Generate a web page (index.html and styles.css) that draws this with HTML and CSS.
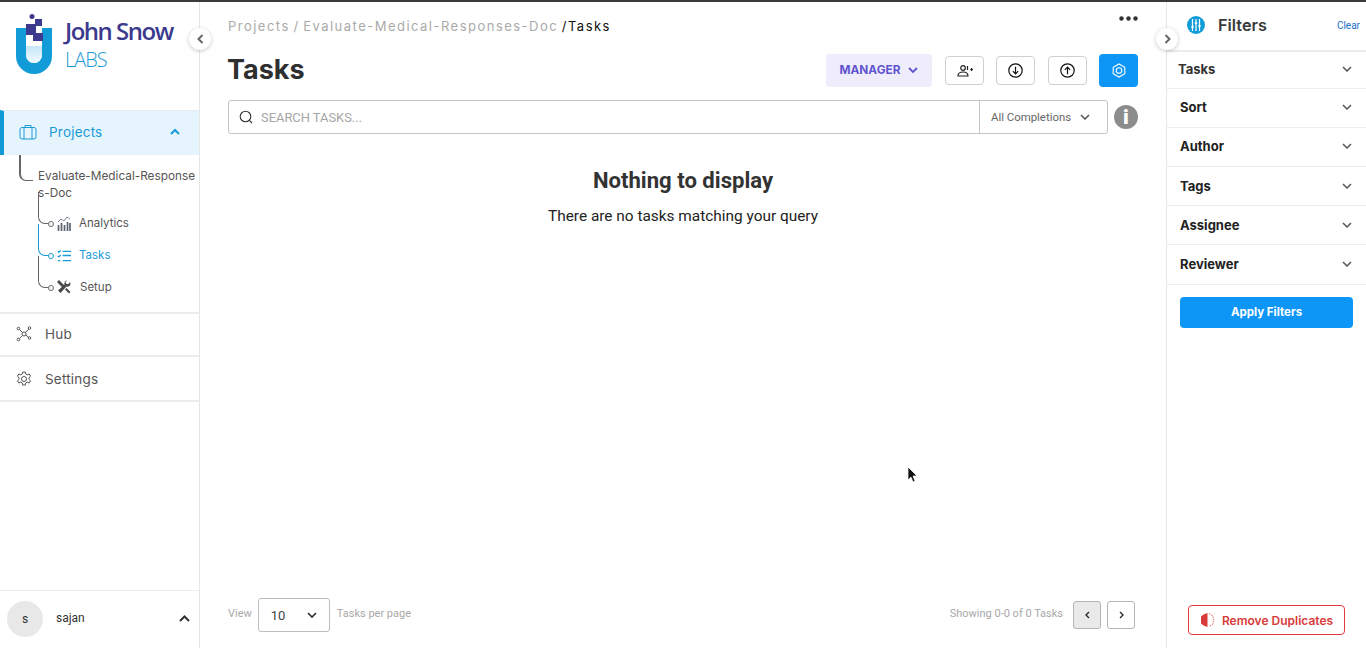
FILE: index.html
```html
<!DOCTYPE html>
<html lang="en">
<head>
<meta charset="utf-8">
<title>Tasks</title>
<link rel="stylesheet" href="styles.css">
</head>
<body>
<div class="app">
  <aside class="sidebar">
    <div class="logo">
      <svg class="logo-mark" width="36" height="60" viewBox="0 0 36 60">
        <defs><linearGradient id="flask" x1="0" y1="0" x2="0" y2="1"><stop offset="0" stop-color="#c4e6f8"/><stop offset="1" stop-color="#f2fafe"/></linearGradient></defs>
        <path d="M0 14h10v27a8 8 0 0 0 16 0V14h10v28a18 18 0 0 1-36 0z" fill="#119cd8"/>
        <path d="M10 32h16v9a8 8 0 0 1-16 0z" fill="url(#flask)"/>
        <rect x="19" y="5" width="7" height="7" fill="#3c3a8e"/>
        <rect x="10" y="10" width="10" height="11" fill="#3c3a8e"/>
        <rect x="17" y="19" width="10" height="8" fill="#3c3a8e"/>
        <circle cx="16" cy="2.500" r="2.500" fill="#3c3a8e"/>
      </svg>
      <div class="logo-text">
        <div class="logo-john">John Snow</div>
        <div class="logo-labs">LABS</div>
      </div>
    </div>
    <nav class="nav">
      <div class="nav-item active">
        <svg class="nav-icon" width="18" height="16" viewBox="0 0 18 16" fill="none" stroke="#1b9ad8" stroke-width="1"><rect x="1" y="3.500" width="16" height="11.500" rx="2"/><path d="M6 3.500V1.500h6v2M5 3.500V15M13 3.500V15"/></svg>
        <span class="nav-label">Projects</span>
        <svg class="nav-chev" width="12" height="8" viewBox="0 0 12 8" fill="none" stroke="#1b9ad8" stroke-width="2"><path d="M2 6l4-4 4 4"/></svg>
      </div>
      <div class="tree">
        <div class="tree-project">Evaluate-Medical-Response<br>s-Doc</div>
        <div class="tree-row">
          <svg width="14" height="15" viewBox="0 0 14 15" fill="none" stroke="#5b6470"><path d="M1 6l3-3 3 2 3-4 3 2" stroke-width=".8"/><path d="M1.500 15V9M4.500 15V7M7.500 15V9M10.500 15V6M13 15V7" stroke-width="1.700"/></svg>
          <span>Analytics</span>
        </div>
        <div class="tree-row current">
          <svg width="14" height="13" viewBox="0 0 15 13" fill="none" stroke="#1b9ad8" stroke-width="1.400"><path d="M1 2l1 1 2-2M1 7l1 1 2-2M1 12h2.500M6 2h9M6 6.500h9M6 12h9"/></svg>
          <span>Tasks</span>
        </div>
        <div class="tree-row">
          <svg width="14" height="14" viewBox="0 0 14 14" fill="#4a4a4a"><path d="M0 2l2-2 5 5 2 1-3 3-1-2z"/><path d="M13.500 4a3 3 0 0 1-4 2.500L3.500 13 1 10.500 7.500 4.500A3 3 0 0 1 10 .5L8.500 2.500l1 1.500 2 .0 1.500-2z"/><path d="M8 9.500l1.500-1.500 4 4-1.500 1.500z"/></svg>
          <span class="setup">Setup</span>
        </div>
      </div>
      <div class="nav-item plain first">
        <svg class="nav-icon" width="16" height="16" viewBox="0 0 16 16" fill="none" stroke="#555" stroke-width="1"><circle cx="8" cy="8" r="2"/><circle cx="2.500" cy="2.500" r="1.300"/><circle cx="13.500" cy="2" r="1.300"/><circle cx="2.500" cy="13.500" r="1.300"/><circle cx="13.500" cy="12" r="1.300"/><path d="M3.500 3.500l3 3M12.800 3.200L9.300 6.500M3.500 12.500l3-3M12.500 11.300L9.800 9"/></svg>
        <span class="nav-label">Hub</span>
      </div>
      <div class="nav-item plain">
        <svg class="nav-icon" width="16" height="16" viewBox="0 0 16 16" fill="none" stroke="#555" stroke-width="1"><circle cx="8" cy="8" r="2.500"/><path d="M6.700 1h2.600l.4 2 1.600.8 1.900-.8 1.300 2.200-1.500 1.400v1.800l1.500 1.400-1.300 2.200-1.900-.8-1.600.8-.4 2H6.700l-.4-2-1.600-.8-1.900.8-1.300-2.200 1.500-1.400V6.600L1.500 5.200l1.300-2.200 1.900.8 1.600-.8z"/></svg>
        <span class="nav-label">Settings</span>
      </div>
    </nav>
    <div class="user">
      <span class="avatar">s</span>
      <span class="user-name">sajan</span>
      <svg width="11" height="7" viewBox="0 0 11 7" fill="none" stroke="#333" stroke-width="2"><path d="M1 6l4.500-4.500L10 6"/></svg>
    </div>
    <button class="collapse left" aria-label="Collapse"><svg width="7" height="10" viewBox="0 0 7 10" fill="none" stroke="#666" stroke-width="2"><path d="M5.500 1L1.500 5l4 4"/></svg></button>
  </aside>

  <main class="main">
    <div class="crumb-row">
      <div class="crumbs"><span class="muted">Projects / Evaluate-Medical-Responses-Doc</span> <span>/Tasks</span></div>
      <svg width="19" height="5" viewBox="0 0 19 5" fill="#333"><circle cx="2.500" cy="2.500" r="2.200"/><circle cx="9.500" cy="2.500" r="2.200"/><circle cx="16.500" cy="2.500" r="2.200"/></svg>
    </div>
    <div class="title-row">
      <h1>Tasks</h1>
      <div class="actions">
        <button class="manager">MANAGER
          <svg width="10" height="7" viewBox="0 0 10 7" fill="none" stroke="#5f55cf" stroke-width="1.800"><path d="M1 1l4 4 4-4"/></svg>
        </button>
        <button class="icon-btn"><svg width="16" height="12" viewBox="0 0 16 12" fill="none" stroke="#222" stroke-width="1.200"><circle cx="6" cy="3" r="2.300"/><path d="M1 11c0-3 2-4 5-4s5 1 5 4z"/><path d="M10.500 1v4M13.200 4.500h2.800M14.600 3.100v2.800"/></svg></button>
        <button class="icon-btn"><svg width="15" height="15" viewBox="0 0 15 15" fill="none" stroke="#111" stroke-width="1.200"><circle cx="7.500" cy="7.500" r="6.700"/><path d="M7.500 3.800v7M4.800 8.200l2.700 2.700 2.700-2.700"/></svg></button>
        <button class="icon-btn wide-gap"><svg width="15" height="15" viewBox="0 0 15 15" fill="none" stroke="#111" stroke-width="1.200"><circle cx="7.500" cy="7.500" r="6.700"/><path d="M7.500 11.200v-7M4.800 6.800l2.700-2.700 2.700 2.700"/></svg></button>
        <button class="primary-btn"><svg width="14" height="15" viewBox="0 0 14 15" fill="none" stroke="#fff" stroke-width="1.100"><path d="M7 1l5.800 3.200v6.600L7 14l-5.800-3.200V4.200z"/><circle cx="7" cy="7.500" r="2.800"/></svg></button>
      </div>
    </div>
    <div class="search-row">
      <div class="search">
        <div class="search-field">
          <svg width="14" height="14" viewBox="0 0 14 14" fill="none" stroke="#333" stroke-width="1.100"><circle cx="6.500" cy="6.500" r="5.300"/><path d="M10.400 10.400L13 13"/></svg>
          <span>SEARCH TASKS...</span>
        </div>
        <div class="completions"><span>All Completions</span>
          <svg width="10" height="6" viewBox="0 0 10 6" fill="none" stroke="#555" stroke-width="1.500"><path d="M1 1l4 4 4-4"/></svg>
        </div>
      </div>
      <span class="info">i</span>
    </div>
    <div class="empty">
      <h2>Nothing to display</h2>
      <p>There are no tasks matching your query</p>
    </div>
    <div class="pager-row">
      <span class="hint">View</span>
      <div class="per-page"><span>10</span>
        <svg width="10" height="6" viewBox="0 0 10 6" fill="none" stroke="#333" stroke-width="1.700"><path d="M1 1l4 4 4-4"/></svg>
      </div>
      <span class="hint">Tasks per page</span>
      <span class="hint showing">Showing 0-0 of 0 Tasks</span>
      <button class="page-btn disabled"><svg width="5" height="8" viewBox="0 0 5 8" fill="none" stroke="#222" stroke-width="1.300"><path d="M4 1L1 4l3 3"/></svg></button>
      <button class="page-btn"><svg width="5" height="8" viewBox="0 0 5 8" fill="none" stroke="#222" stroke-width="1.300"><path d="M1 1l3 3-3 3"/></svg></button>
    </div>
    <svg class="cursor" width="12" height="18" viewBox="0 0 12 18"><path d="M1 1v13l3-3 2 5 2-1-2-5h4z" fill="#111" stroke="#fff" stroke-width=".7"/></svg>
  </main>

  <aside class="filters">
    <div class="filters-head">
      <span class="filters-badge"><svg width="10" height="12" viewBox="0 0 10 12" stroke="#fff" stroke-width="1.200" fill="none"><path d="M1.500 0v12M5 0v12M8.500 0v12"/><path d="M.2 8h2.600M3.700 4h2.600M7.200 7h2.600" stroke-width="1.600"/></svg></span>
      <span class="filters-title">Filters</span>
      <span class="clear">Clear</span>
    </div>
    <div class="filter-row first"><span>Tasks</span><svg width="10" height="6" viewBox="0 0 10 6" fill="none" stroke="#555" stroke-width="1.500"><path d="M1 1l4 4 4-4"/></svg></div>
    <div class="filter-row"><span>Sort</span><svg width="10" height="6" viewBox="0 0 10 6" fill="none" stroke="#555" stroke-width="1.500"><path d="M1 1l4 4 4-4"/></svg></div>
    <div class="filter-row"><span>Author</span><svg width="10" height="6" viewBox="0 0 10 6" fill="none" stroke="#555" stroke-width="1.500"><path d="M1 1l4 4 4-4"/></svg></div>
    <div class="filter-row lower"><span>Tags</span><svg width="10" height="6" viewBox="0 0 10 6" fill="none" stroke="#555" stroke-width="1.500"><path d="M1 1l4 4 4-4"/></svg></div>
    <div class="filter-row lower"><span>Assignee</span><svg width="10" height="6" viewBox="0 0 10 6" fill="none" stroke="#555" stroke-width="1.500"><path d="M1 1l4 4 4-4"/></svg></div>
    <div class="filter-row last"><span>Reviewer</span><svg width="10" height="6" viewBox="0 0 10 6" fill="none" stroke="#555" stroke-width="1.500"><path d="M1 1l4 4 4-4"/></svg></div>
    <button class="apply">Apply Filters</button>
    <button class="dedupe">
      <svg width="15" height="14" viewBox="0 0 15 14"><path d="M3.500 1.500L7.500 0v14l-4-1.500L1 10.500v-7z" fill="#d83a3a"/><path d="M9 .5l3.500 2 1.500 4.500-1.500 4.500-3.500 2" fill="none" stroke="#d83a3a" stroke-width=".8" stroke-dasharray="1.500 1"/></svg>
      Remove Duplicates
    </button>
    <button class="collapse right" aria-label="Collapse filters"><svg width="7" height="10" viewBox="0 0 7 10" fill="none" stroke="#666" stroke-width="2"><path d="M1.500 1l4 4-4 4"/></svg></button>
  </aside>
</div>
</body>
</html>
```

FILE: styles.css
```css
* { box-sizing: border-box; }
html, body { margin: 0; height: 100%; overflow: hidden; }
body { font-family: Inter, "Liberation Sans", sans-serif; color: #333; background: #fff; }
button { font: inherit; cursor: pointer; padding: 0; }
h1, h2, p { margin: 0; }

.app { display: flex; height: 648px; border-top: 2px solid #3a3a3a; }

.sidebar { position: relative; width: 200px; flex: none; display: flex; flex-direction: column; border-right: 1px solid #e6e6e6; }
.logo { height: 108px; display: flex; align-items: flex-start; gap: 13px; padding: 12px 0 0 16px; }
.logo-text { padding-top: 2px; }
.logo-john { font-family: "Open Sans", sans-serif; font-weight: 600; font-size: 24px; line-height: 30px; letter-spacing: -1.500px; color: #3c3a8e; white-space: nowrap; }
.logo-labs { font-family: "Open Sans", sans-serif; font-weight: 300; font-size: 20px; line-height: 27px; letter-spacing: -1px; color: #1b9ad8; }

.nav { flex: 1; }
.nav-item { display: flex; align-items: center; height: 45px; font-size: 13.500px; color: #555; }
.nav-item.active { height: 45px; background: #e6f5fd; border-left: 4px solid #0f9ad6; border-top: 1px solid #e4eef3; padding: 0 0 2px 15px; color: #1b9ad8; }
.nav-item.active .nav-icon { margin-right: 12px; }
.nav-chev { margin-left: auto; margin-right: 18px; }
.nav-item.plain { padding-left: 16px; border-bottom: 2px solid #ececec; }
.nav-item.plain .nav-icon { margin-right: 13px; }
.nav-item.first { border-top: 2px solid #ececec; padding-bottom: 1px; }
.nav-label { letter-spacing: .2px; }

.tree { position: relative; height: 157px; padding: 13px 0 0 38px; }
.tree::before { content: ""; position: absolute; left: 19px; top: 0; width: 12px; height: 25px; border-left: 2px solid #666; border-bottom: 1.500px solid #666; border-bottom-left-radius: 7px; }
.tree-project { font-size: 11.800px; line-height: 17px; color: #555; height: 39px; padding-bottom: 2px; white-space: nowrap; }
.tree-row { position: relative; display: flex; align-items: center; gap: 8px; height: 32px; margin-left: 19px; font-size: 11.500px; color: #555; }
.tree-row svg { flex: none; width: 14px; }
.tree-row::before { content: ""; position: absolute; left: -19px; top: -15px; width: 11px; height: 31px; border-left: 1.500px solid #666; border-bottom: 1.500px solid #666; border-bottom-left-radius: 7px; }
.tree-row::after { content: ""; position: absolute; left: -9px; top: 14px; width: 4px; height: 4px; border-radius: 50%; background: #fff; border: 1px solid #666; }
.tree-row.current { color: #1b9ad8; }
.tree-row.current::before { border-color: #1b9ad8; }
.tree-row.current::after { border-color: #1b9ad8; }
.setup { margin-left: 1px; }

.user { display: flex; align-items: center; height: 58px; padding: 0 9px 2px 7px; border-top: 1px solid #ececec; font-family: Roboto, sans-serif; font-size: 12px; color: #333; }
.avatar { width: 36px; height: 36px; border-radius: 50%; background: #e8e8e8; display: flex; align-items: center; justify-content: center; font-size: 12px; margin-right: 13px; }
.user-name { flex: 1; margin-top: -2px; }

.collapse { position: absolute; top: 26px; width: 22px; height: 22px; border: 0; border-radius: 50%; background: #fff; box-shadow: 0 1px 4px rgba(0,0,0,.22); display: flex; align-items: center; justify-content: center; z-index: 2; }
.collapse.left { right: -12px; }
.collapse.right { left: -11px; }

.main { position: relative; flex: 1; display: flex; flex-direction: column; min-width: 0; padding: 0 28px; }
.crumb-row { display: flex; justify-content: space-between; align-items: flex-start; height: 46px; padding-top: 15px; }
.crumb-row svg { margin-top: -1px; }
.crumbs { font-size: 13px; line-height: 18px; letter-spacing: 1.480px; word-spacing: -1.500px; color: #111; }
.muted { color: #aaa; }
.title-row { display: flex; justify-content: space-between; align-items: center; height: 39px; margin-top: 3px; }
h1 { font-size: 27px; font-weight: 700; color: #2f2f2f; line-height: 39px; margin: -2px 0 0 -1px; }
.actions { display: flex; align-items: center; gap: 12px; }
.manager { width: 106px; height: 33px; margin-right: 1px; border: 0; border-radius: 3px; background: #efedfc; color: #5f55cf; font-size: 11.800px; font-weight: 700; display: flex; align-items: center; justify-content: center; gap: 8px; padding-bottom: 1px; }
.icon-btn { width: 39px; height: 29px; border: 1px solid #cfcfcf; border-radius: 4px; background: #fff; display: flex; align-items: center; justify-content: center; }
.wide-gap { margin-left: 1px; }
.primary-btn { width: 39px; height: 33px; border: 0; border-radius: 4px; background: #0d96f5; display: flex; align-items: center; justify-content: center; }

.search-row { display: flex; align-items: center; gap: 6px; margin-top: 10px; }
.search { flex: 1; height: 34px; display: flex; border: 1px solid #c4c4c4; border-radius: 3px; font-family: Roboto, sans-serif; }
.search-field { flex: 1; display: flex; align-items: center; gap: 8px; padding-left: 10px; font-size: 12.900px; color: #a6a6a6; }
.completions { width: 128px; border-left: 1px solid #c4c4c4; display: flex; align-items: center; gap: 9px; padding: 0 0 1px 11px; font-size: 11.400px; color: #666; }
.info { width: 24px; height: 24px; border-radius: 50%; background: #8c8c8c; color: #fff; display: flex; align-items: center; justify-content: center; font-family: Roboto, sans-serif; font-weight: 900; font-size: 21px; }

.empty { flex: 1; text-align: center; font-family: Roboto, sans-serif; padding-top: 32px; }
h2 { font-size: 22.100px; line-height: 28px; font-weight: 700; color: #333; }
.empty p { margin-top: 12px; font-size: 15.400px; line-height: 20px; color: #222; }

.pager-row { display: flex; align-items: center; height: 34px; margin-bottom: 16px; font-family: Roboto, sans-serif; }
.hint { font-size: 11px; color: #a8a8a8; margin-top: -4px; }
.per-page { width: 72px; height: 34px; margin: 0 7px 0 6px; display: flex; align-items: center; justify-content: space-between; padding: 0 12px; border: 1px solid #bdbdbd; border-radius: 3px; font-size: 13px; color: #444; }
.showing { margin-left: auto; margin-right: 10px; }
.page-btn { width: 28px; height: 28px; margin-right: 6px; border: 1px solid #b5b5b5; border-radius: 3px; background: #fff; display: flex; align-items: center; justify-content: center; }
.page-btn:last-child, .page-btn + .page-btn { margin-right: 3px; }
.page-btn.disabled { background: #e9e9e9; }
.cursor { position: absolute; left: 707px; top: 464px; }

.filters { position: relative; width: 200px; flex: none; display: flex; flex-direction: column; border-left: 1px solid #e6e6e6; }
.filters-head { display: flex; align-items: center; height: 50px; padding: 0 6px 2px 20px; border-bottom: 2px solid #ececec; }
.filters-badge { width: 18px; height: 18px; border-radius: 50%; background: #119cd8; display: flex; align-items: center; justify-content: center; margin-right: 13px; }
.filters-title { flex: 1; font-size: 16.300px; font-weight: 600; color: #3a3a3a; }
.clear { font-family: Roboto, sans-serif; font-size: 10px; color: #1a6fc4; }
.filter-row { display: flex; align-items: center; justify-content: space-between; height: 39px; padding: 0 14px 2px 13px; border-bottom: 1px solid #ececec; font-size: 13px; font-weight: 700; color: #222; }
.filter-row.first { height: 37px; padding-left: 11px; color: #333; }
.filter-row.lower { padding-bottom: 0; }
.filter-row.last { height: 40px; }
.apply { margin: 12px 13px 0; height: 31px; border: 0; border-radius: 4px; background: #0d96f5; color: #fff; font-size: 11.500px; font-weight: 700; padding-bottom: 2px; }
.dedupe { margin: auto 21px 13px; height: 30px; border: 1px solid #e0393e; border-radius: 4px; background: #fff; color: #d83a3a; font-size: 12px; font-weight: 600; display: flex; align-items: center; justify-content: center; gap: 7px; }
```
